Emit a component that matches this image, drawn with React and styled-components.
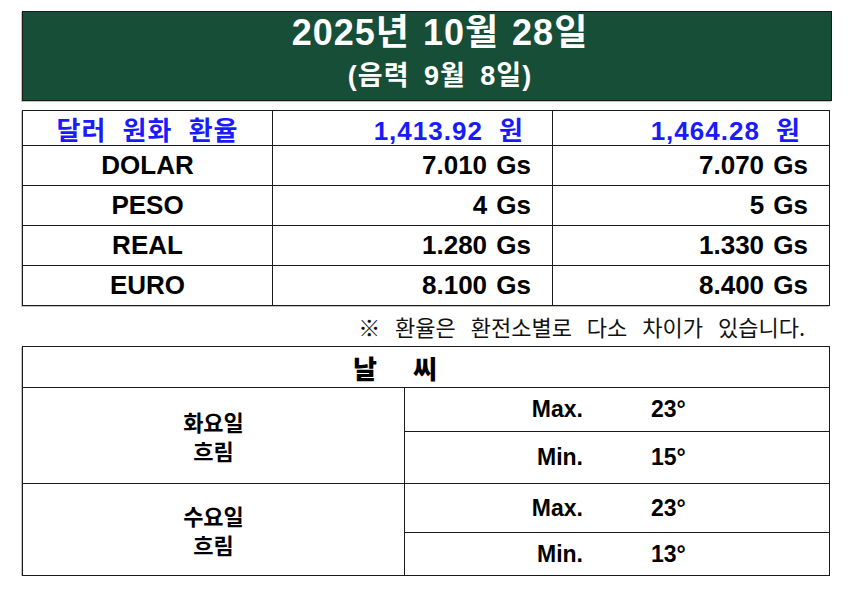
import React from "react";
import { styled, createGlobalStyle } from "styled-components";

const rates = [
  { name: "DOLAR", buy: "7.010 Gs", sell: "7.070 Gs" },
  { name: "PESO", buy: "4 Gs", sell: "5 Gs" },
  { name: "REAL", buy: "1.280 Gs", sell: "1.330 Gs" },
  { name: "EURO", buy: "8.100 Gs", sell: "8.400 Gs" },
];

const weather = [
  { day: "화요일", sky: "흐림", max: "23°", min: "15°" },
  { day: "수요일", sky: "흐림", max: "23°", min: "13°" },
];

function App() {
  return (
    <>
      <Global />
      <Page>
        <Banner>
          <Title>2025년 10월 28일</Title>
          <Lunar>(음력 9월 8일)</Lunar>
        </Banner>

        <RateGrid>
          <RateCell $head>달러 원화 환율</RateCell>
          <RateCell $head $num>1,413.92 원</RateCell>
          <RateCell $head $num>1,464.28 원</RateCell>
          {rates.map((r) => (
            <React.Fragment key={r.name}>
              <RateCell>{r.name}</RateCell>
              <RateCell $num>{r.buy}</RateCell>
              <RateCell $num>{r.sell}</RateCell>
            </React.Fragment>
          ))}
        </RateGrid>

        <Note>※ 환율은 환전소별로 다소 차이가 있습니다.</Note>

        <WeatherGrid>
          <WeatherTitle>날 씨</WeatherTitle>
          {weather.map((w, i) => (
            <React.Fragment key={w.day}>
              <DayCell $rows={i === 0 ? "2 / 4" : "4 / 6"}>
                <div>
                  <DayLine>{w.day}</DayLine>
                  <DayLine>{w.sky}</DayLine>
                </div>
              </DayCell>
              <TempCell>
                <TempLabel>Max.</TempLabel>
                <TempValue>{w.max}</TempValue>
              </TempCell>
              <TempCell>
                <TempLabel>Min.</TempLabel>
                <TempValue>{w.min}</TempValue>
              </TempCell>
            </React.Fragment>
          ))}
        </WeatherGrid>
      </Page>
    </>
  );
}

export default App;

const Global = createGlobalStyle`
  body {
    margin: 0;
    background: #fff;
    font-family: "Liberation Sans", "Noto Sans CJK KR", sans-serif;
  }
`;

const Page = styled.div`
  width: 850px;
  padding: 11px 0 0 22px;
  box-sizing: border-box;
  display: flex;
  flex-direction: column;
  align-items: flex-start;
`;

const Banner = styled.div`
  width: 810px;
  height: 90px;
  box-sizing: border-box;
  padding-left: 26px;
  background: #164e37;
  border: 1px solid #1a1a1a;
  box-shadow: -1px 1px 0 #c4c4c4;
  display: flex;
  flex-direction: column;
  align-items: center;
  color: #fff;
  font-weight: 700;
`;

const Title = styled.div`
  font-size: 36px;
  line-height: 42px;
  letter-spacing: 1px;
  word-spacing: 2px;
`;

const Lunar = styled.div`
  font-size: 27px;
  line-height: 30px;
  margin-top: 7px;
  letter-spacing: 1px;
  word-spacing: 6px;
`;

const RateGrid = styled.div`
  margin-top: 9px;
  display: grid;
  grid-template-columns: 250px 280px 277px;
  grid-template-rows: 35px repeat(4, 40px);
  border-top: 1px solid #1a1a1a;
  border-left: 1px solid #1a1a1a;
  box-shadow: -1px 1px 0 #c4c4c4;
`;

const RateCell = styled.div`
  box-sizing: border-box;
  border-right: 1px solid #1a1a1a;
  border-bottom: 1px solid #1a1a1a;
  display: flex;
  align-items: center;
  justify-content: ${(p) => (p.$num ? "flex-end" : "center")};
  padding-right: ${(p) => (p.$num ? (p.$head ? "28px" : "21px") : "0")};
  font-weight: 700;
  font-size: 26px;
  color: ${(p) => (p.$head ? "#1a1aff" : "#000")};
  letter-spacing: ${(p) => (p.$head ? "1px" : "0")};
  word-spacing: ${(p) => (p.$head ? "8px" : "2px")};
`;

const Note = styled.div`
  width: 783px;
  text-align: right;
  font-family: "Noto Sans CJK KR", sans-serif;
  font-size: 22px;
  line-height: 30px;
  margin-top: 5px;
  word-spacing: 10px;
  color: #111;
`;

const WeatherGrid = styled.div`
  margin-top: 5px;
  display: grid;
  grid-template-columns: 382px 425px;
  grid-template-rows: 41px 44px 52px 49px 43px;
  border-top: 1px solid #1a1a1a;
  border-left: 1px solid #1a1a1a;
  box-shadow: -1px 1px 0 #c4c4c4;
`;

const Cell = styled.div`
  box-sizing: border-box;
  border-right: 1px solid #1a1a1a;
  border-bottom: 1px solid #1a1a1a;
  display: flex;
  align-items: center;
`;

const WeatherTitle = styled(Cell)`
  grid-column: 1 / 3;
  justify-content: center;
  padding-right: 62px;
  font-family: "Noto Sans CJK KR", sans-serif;
  font-weight: 900;
  font-size: 26px;
  word-spacing: 30px;
`;

const DayCell = styled(Cell)`
  grid-row: ${(p) => p.$rows};
  justify-content: center;
  text-align: center;
  font-family: "Noto Sans CJK KR", sans-serif;
  font-weight: 700;
  font-size: 22px;
`;

const DayLine = styled.div`
  height: 29px;
  line-height: 29px;
`;

const TempCell = styled(Cell)`
  display: grid;
  grid-template-columns: 178px 1fr;
  column-gap: 68px;
  align-items: center;
  font-weight: 700;
  font-size: 23px;
`;

const TempLabel = styled.span`
  text-align: right;
`;

const TempValue = styled.span`
  text-align: left;
`;
